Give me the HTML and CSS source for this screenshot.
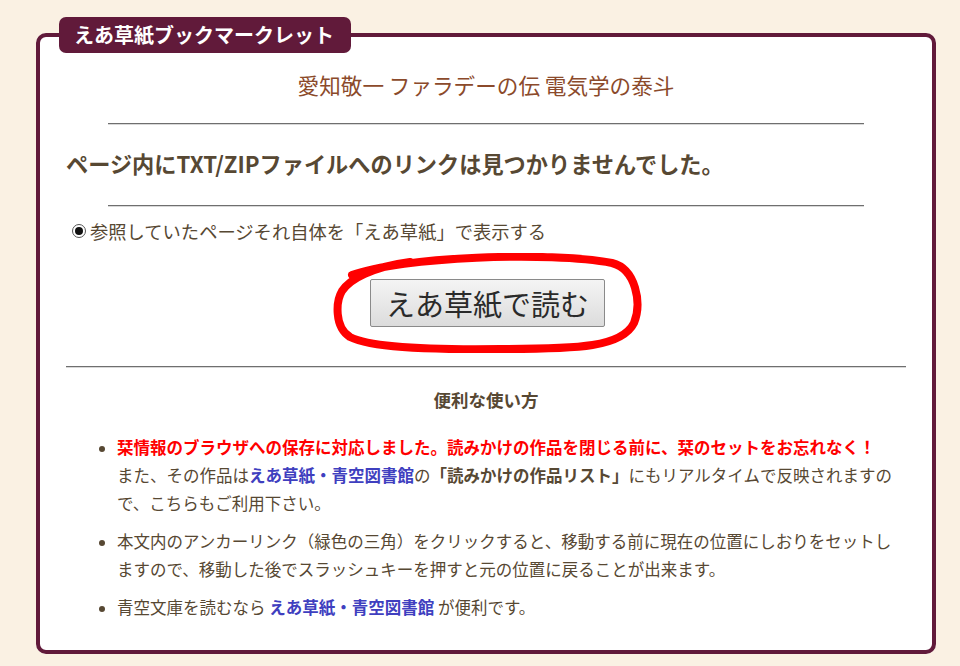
FILE: index.html
```html
<!DOCTYPE html>
<html lang="ja">
<head>
<meta charset="utf-8">
<title>えあ草紙ブックマークレット</title>
<link rel="stylesheet" href="styles.css">
</head>
<body>
<fieldset class="frame">
  <legend class="tab">えあ草紙ブックマークレット</legend>
  <p class="sub">愛知敬一 ファラデーの伝 電気学の泰斗</p>
  <hr class="rule">
  <h2 class="msg">ページ内にTXT/ZIPファイルへのリンクは見つかりませんでした。</h2>
  <hr class="rule">
  <label class="opt"><span class="radio"></span>参照していたページそれ自体を「えあ草紙」で表示する</label>
  <div class="btnwrap">
    <button class="read">えあ草紙で読む</button>
    <svg class="scribble" width="316" height="100" viewBox="0 0 316 100">
      <path d="M22 22 C70 4 220 -2 282 10 C306 16 312 50 304 70 C292 94 250 96 170 96 C90 97 40 94 20 84 C4 74 6 48 12 38 C20 26 42 14 80 9" fill="none" stroke="#ff0000" stroke-width="8" stroke-linecap="round" stroke-linejoin="round"/>
    </svg>
  </div>
  <hr class="rule wide">
  <h3 class="howto">便利な使い方</h3>
  <ul class="tips">
    <li><span class="red">栞情報のブラウザへの保存に対応しました。読みかけの作品を閉じる前に、栞のセットをお忘れなく！</span><br>また、その作品は<a class="link" href="#">えあ草紙・青空図書館</a>の<b class="strong">「読みかけの作品リスト」</b>にもリアルタイムで反映されますので、こちらもご利用下さい。</li>
    <li>本文内のアンカーリンク（緑色の三角）をクリックすると、移動する前に現在の位置にしおりをセットしますので、移動した後でスラッシュキーを押すと元の位置に戻ることが出来ます。</li>
    <li>青空文庫を読むなら <a class="link" href="#">えあ草紙・青空図書館</a> が便利です。</li>
  </ul>
</fieldset>
</body>
</html>
```

FILE: styles.css
```css
html, body {
  margin: 0;
  padding: 0;
  background: #faf1e3;
}
body {
  padding-top: 17px;
  font-family: "Noto Sans CJK JP", "Noto Sans", sans-serif;
  color: #574833;
  height: 649px;
  overflow: hidden;
}
.frame {
  margin: 0 24px 0 36px;
  padding: 0 0 40px;
  border: 4px solid #611a3a;
  border-radius: 10px;
  background: #ffffff;
  box-sizing: border-box;
  height: 637px;
}
.tab {
  margin-left: 19px;
  padding: 0 17px 0 15px;
  height: 36px;
  line-height: 35px;
  background: #611a3a;
  color: #ffffff;
  font-weight: bold;
  font-size: 20px;
  border-radius: 7px;
}
.sub {
  margin: 20px 0 0;
  text-align: center;
  font-size: 21.6px;
  line-height: 24px;
  color: #8b4a2b;
}
.rule {
  width: 756px;
  height: 0;
  margin: 26px auto 0;
  border: 0;
  border-top: 1px solid #6f6f6f;
  border-bottom: 1px solid #d8d8d8;
}
.msg {
  margin: 23px 0 27px 26px;
  font-size: 22.2px;
  line-height: 30px;
  font-weight: bold;
  color: #574833;
}
.msg + .rule { margin-top: 0; }
.opt {
  display: flex;
  align-items: center;
  margin: 12px 0 0 32px;
  font-size: 18.3px;
  line-height: 24px;
}
.radio {
  width: 12px;
  height: 12px;
  border: 1px solid #555;
  border-radius: 50%;
  margin-right: 4px;
  display: inline-flex;
  align-items: center;
  justify-content: center;
  background: #fff;
}
.radio::after {
  content: "";
  width: 8px;
  height: 8px;
  border-radius: 50%;
  background: #111;
}
.btnwrap {
  position: relative;
  display: flex;
  justify-content: center;
  margin-top: 36px;
}
.read {
  width: 235px;
  height: 48px;
  padding: 0;
  margin-left: 3px;
  font-family: "Noto Sans CJK JP", sans-serif;
  font-size: 29px;
  line-height: 44px;
  color: #2a2a2a;
  background: linear-gradient(#f4f4f4, #dcdcdc);
  border: 1px solid #8a8a8a;
  border-radius: 2px;
}
.scribble {
  position: absolute;
  left: 290px;
  top: -26px;
  pointer-events: none;
}
.rule.wide {
  width: 840px;
  margin-top: 39px;
}
.howto {
  margin: 20px 0 0;
  text-align: center;
  font-size: 17.5px;
  line-height: 24px;
  font-weight: bold;
}
.tips {
  margin: 21px 32px 0 0;
  padding-left: 77px;
  font-size: 16.5px;
  line-height: 28px;
}
.tips li {
  margin-bottom: 10px;
}
.tips li::marker {
  font-size: 15px;
}
.red {
  color: #ff0000;
  font-weight: bold;
}
.link {
  color: #3f3fbf;
  font-weight: bold;
  text-decoration: none;
}
.strong {
  color: #574833;
}
```
